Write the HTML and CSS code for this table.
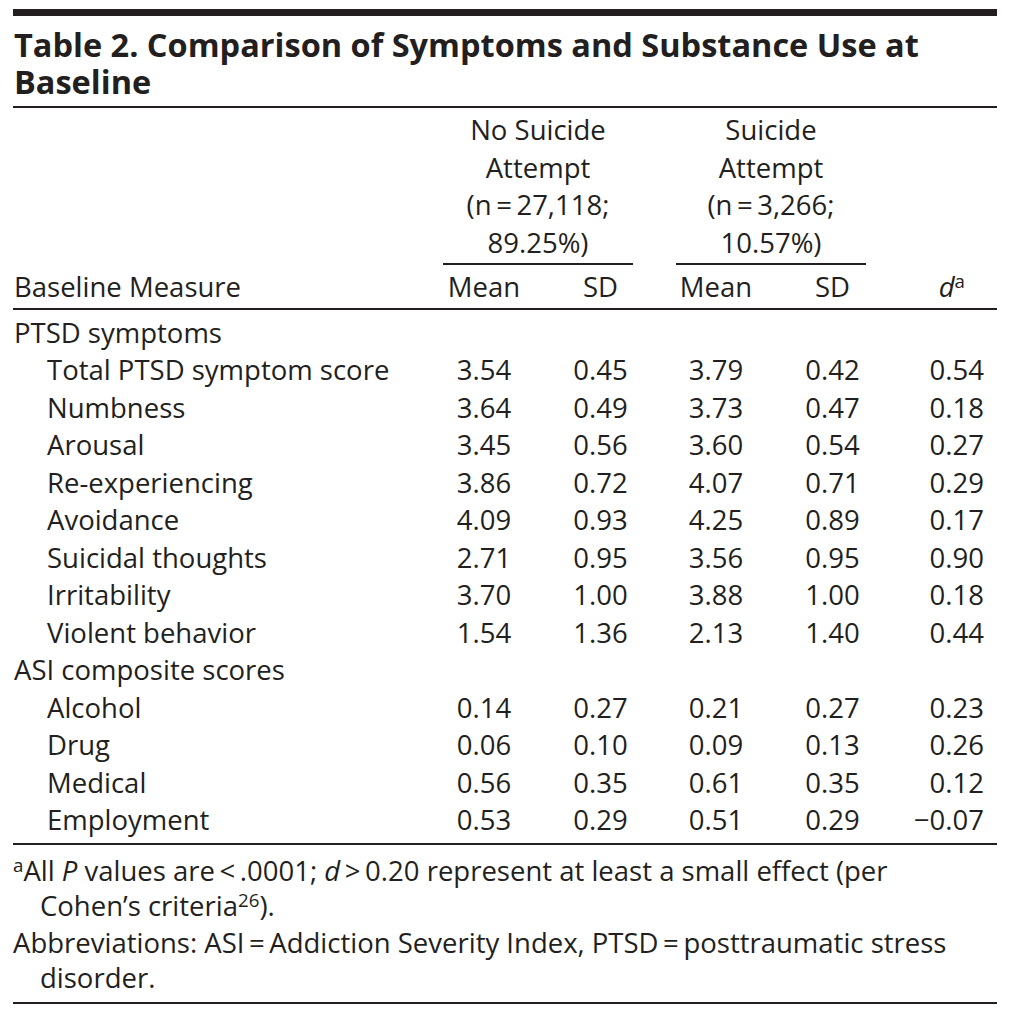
FILE: index.html
```html
<!DOCTYPE html>
<html lang="en">
<head>
<meta charset="utf-8">
<title>Table 2</title>
<link rel="stylesheet" href="styles.css">
</head>
<body>
<div class="table-wrap">
  <div class="top-bar"></div>
  <h1 class="title">Table 2. Comparison of Symptoms and Substance Use at Baseline</h1>
  <div class="grid">
    <div class="h-empty"></div>
    <div class="spanner span-a">No Suicide<br>Attempt<br>(n&#8201;=&#8201;27,118;<br>89.25%)</div>
    <div class="gap"></div>
    <div class="spanner span-b">Suicide<br>Attempt<br>(n&#8201;=&#8201;3,266;<br>10.57%)</div>
    <div class="h-empty"></div>

    <div class="ch label">Baseline Measure</div>
    <div class="ch c-m1">Mean</div>
    <div class="ch c-s1">SD</div>
    <div class="ch"></div>
    <div class="ch c-m2">Mean</div>
    <div class="ch c-s2">SD</div>
    <div class="ch c-d h-d"><i>d</i><sup>a</sup></div>
  </div>

  <div class="grid body">
    <div class="label group">PTSD symptoms</div><div></div><div></div><div></div><div></div><div></div><div></div>
    <div class="label sub">Total PTSD symptom score</div><div class="c-m1">3.54</div><div class="c-s1">0.45</div><div></div><div class="c-m2">3.79</div><div class="c-s2">0.42</div><div class="c-d">0.54</div>
    <div class="label sub">Numbness</div><div class="c-m1">3.64</div><div class="c-s1">0.49</div><div></div><div class="c-m2">3.73</div><div class="c-s2">0.47</div><div class="c-d">0.18</div>
    <div class="label sub">Arousal</div><div class="c-m1">3.45</div><div class="c-s1">0.56</div><div></div><div class="c-m2">3.60</div><div class="c-s2">0.54</div><div class="c-d">0.27</div>
    <div class="label sub">Re-experiencing</div><div class="c-m1">3.86</div><div class="c-s1">0.72</div><div></div><div class="c-m2">4.07</div><div class="c-s2">0.71</div><div class="c-d">0.29</div>
    <div class="label sub">Avoidance</div><div class="c-m1">4.09</div><div class="c-s1">0.93</div><div></div><div class="c-m2">4.25</div><div class="c-s2">0.89</div><div class="c-d">0.17</div>
    <div class="label sub">Suicidal thoughts</div><div class="c-m1">2.71</div><div class="c-s1">0.95</div><div></div><div class="c-m2">3.56</div><div class="c-s2">0.95</div><div class="c-d">0.90</div>
    <div class="label sub">Irritability</div><div class="c-m1">3.70</div><div class="c-s1">1.00</div><div></div><div class="c-m2">3.88</div><div class="c-s2">1.00</div><div class="c-d">0.18</div>
    <div class="label sub">Violent behavior</div><div class="c-m1">1.54</div><div class="c-s1">1.36</div><div></div><div class="c-m2">2.13</div><div class="c-s2">1.40</div><div class="c-d">0.44</div>
    <div class="label group">ASI composite scores</div><div></div><div></div><div></div><div></div><div></div><div></div>
    <div class="label sub">Alcohol</div><div class="c-m1">0.14</div><div class="c-s1">0.27</div><div></div><div class="c-m2">0.21</div><div class="c-s2">0.27</div><div class="c-d">0.23</div>
    <div class="label sub">Drug</div><div class="c-m1">0.06</div><div class="c-s1">0.10</div><div></div><div class="c-m2">0.09</div><div class="c-s2">0.13</div><div class="c-d">0.26</div>
    <div class="label sub">Medical</div><div class="c-m1">0.56</div><div class="c-s1">0.35</div><div></div><div class="c-m2">0.61</div><div class="c-s2">0.35</div><div class="c-d">0.12</div>
    <div class="label sub">Employment</div><div class="c-m1">0.53</div><div class="c-s1">0.29</div><div></div><div class="c-m2">0.51</div><div class="c-s2">0.29</div><div class="c-d">&minus;0.07</div>
  </div>

  <div class="notes">
    <p class="note"><sup>a</sup>All <i>P</i> values are&#8201;&lt;&#8201;.0001; <i>d</i>&#8201;&gt;&#8201;0.20 represent at least a small effect (per<br>Cohen’s criteria<sup>26</sup>).</p>
    <p class="note abbr">Abbreviations: ASI&#8201;=&#8201;Addiction Severity Index, PTSD&#8201;=&#8201;posttraumatic stress<br>disorder.</p>
  </div>
</div>
</body>
</html>
```

FILE: styles.css
```css
html, body {
  margin: 0;
  padding: 0;
  background: #ffffff;
}

body {
  color: #231f20;
  font-family: "Open Sans", "DejaVu Sans", sans-serif;
  font-size: 27.5px;
}

.table-wrap {
  width: 984px;
  margin: 9px 0 0 13px;
}

.top-bar {
  height: 7px;
  background: #231f20;
}

.title {
  margin: 0;
  padding: 10px 0 6px 1px;
  font-size: 32.5px;
  font-weight: 700;
  line-height: 37px;
  border-bottom: 2px solid #231f20;
}

.grid {
  display: grid;
  grid-template-columns: 430px 95px 95px 43px 95px 95px 131px;
  line-height: 37.5px;
}

.grid > div {
  white-space: nowrap;
}

.spanner {
  grid-column: span 2;
  text-align: center;
  padding-top: 3px;
  padding-bottom: 2px;
  border-bottom: 2px solid #231f20;
}

.ch {
  border-bottom: 2px solid #231f20;
  padding-top: 3px;
  padding-bottom: 2px;
}

.label {
  padding-left: 1px;
}

.label.sub {
  padding-left: 34px;
}

.c-m1 {
  text-align: center;
  padding-right: 13px;
}

.c-s1 {
  text-align: center;
  padding-left: 30px;
}

.c-m2 {
  text-align: center;
  padding-right: 15px;
}

.c-s2 {
  text-align: center;
  padding-left: 28px;
}

.c-d {
  text-align: right;
  padding-right: 13px;
}

.h-d {
  padding-right: 32px;
}

.h-d sup,
.note sup {
  font-size: 0.68em;
  line-height: 0;
  vertical-align: 0.5em;
}

.body {
  padding-top: 4px;
  padding-bottom: 4px;
  border-bottom: 2px solid #231f20;
}

.notes {
  padding: 8px 0 5px 0;
  border-bottom: 2px solid #231f20;
}

.note {
  margin: 0 0 2px 0;
  padding-left: 27px;
  text-indent: -27px;
  line-height: 35px;
}

.note.abbr {
  text-indent: -27px;
}
```
